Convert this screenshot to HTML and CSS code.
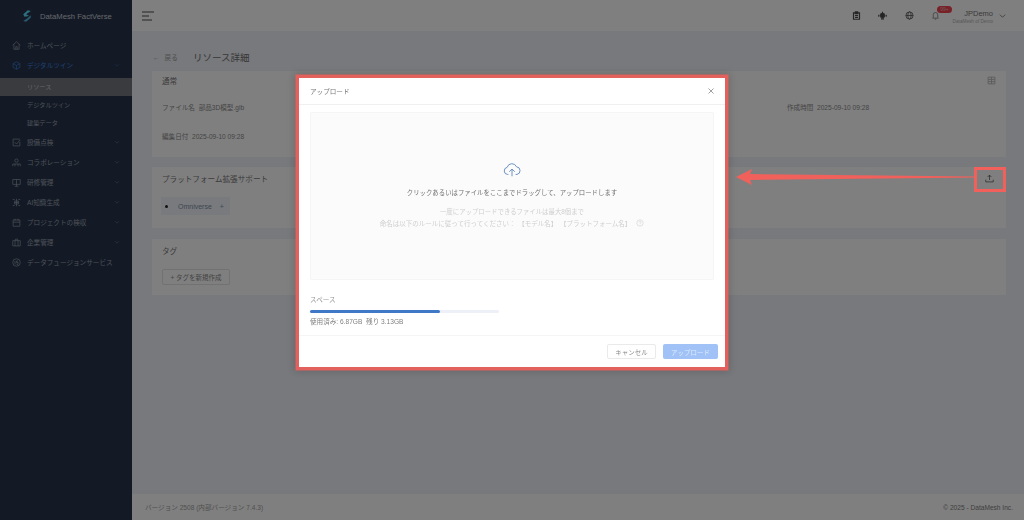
FILE: index.html
```html
<!DOCTYPE html>
<html lang="ja">
<head>
  <meta charset="UTF-8" />
  <meta name="viewport" content="width=device-width, initial-scale=1.0"/>
  <title>リソース詳細</title>
  <link rel="stylesheet" href="styles.css">
</head>
<body>
  <div class="app">
    <aside class="sidebar">
      <div class="brand">
        <svg class="brand-logo" viewBox="0 0 12 14"><path d="M7 0 L10.5 1 L5 5 L8.5 7 L3 8 L1.5 5 Z" fill="#5adfff"/><path d="M10.5 6 L10.5 9 L5 14 L1.5 13 L7 9.5 Z" fill="#4fb4e0"/></svg>
        <span>DataMesh FactVerse</span>
      </div>
      <nav class="menu">
        <div class="menu-item">
          <svg class="menu-icon" viewBox="0 0 12 12"><path d="M1 5.5 L6 1 L11 5.5 M2.5 4.5 V11 H9.5 V4.5 M5 11 V7.5 H7 V11"/></svg>
          <span>ホームページ</span>
        </div>
        <div class="menu-item is-active">
          <svg class="menu-icon" viewBox="0 0 12 12"><path d="M6 1 L10.5 3.5 V8.5 L6 11 L1.5 8.5 V3.5 Z M1.5 3.5 L6 6 L10.5 3.5 M6 6 V11"/></svg>
          <span>デジタルツイン</span>
          <svg class="menu-caret" viewBox="0 0 8 8"><path d="M1.5 3 L4 5.5 L6.5 3"/></svg>
        </div>
        <div class="submenu">
          <div class="menu-sub is-current">リソース</div>
          <div class="menu-sub">デジタルツイン</div>
          <div class="menu-sub">建築データ</div>
        </div>
        <div class="menu-item">
          <svg class="menu-icon" viewBox="0 0 12 12"><path d="M10.5 5 V10.5 H1.5 V1.5 H10.5 M3.5 5.5 L6 8 L11 2.5"/></svg>
          <span>設備点検</span>
          <svg class="menu-caret" viewBox="0 0 8 8"><path d="M1.5 3 L4 5.5 L6.5 3"/></svg>
        </div>
        <div class="menu-item">
          <svg class="menu-icon" viewBox="0 0 12 12"><circle cx="6" cy="3.5" r="2.2"/><path d="M1 11 V8 H11 V11 M4 8 V11 M8 8 V11"/></svg>
          <span>コラボレーション</span>
          <svg class="menu-caret" viewBox="0 0 8 8"><path d="M1.5 3 L4 5.5 L6.5 3"/></svg>
        </div>
        <div class="menu-item">
          <svg class="menu-icon" viewBox="0 0 12 12"><path d="M1 2 H11 V8.5 H1 Z M6 2 V11 M3.5 11 H8.5"/></svg>
          <span>研修管理</span>
          <svg class="menu-caret" viewBox="0 0 8 8"><path d="M1.5 3 L4 5.5 L6.5 3"/></svg>
        </div>
        <div class="menu-item">
          <svg class="menu-icon" viewBox="0 0 12 12"><path d="M1 2 L3.5 2 M8.5 2 L11 2 M1 10 L3.5 10 M8.5 10 L11 10 M6 1 V11 M3 6 H9 M3.5 4 H8.5 V8 H3.5 Z"/></svg>
          <span>AI知識生成</span>
          <svg class="menu-caret" viewBox="0 0 8 8"><path d="M1.5 3 L4 5.5 L6.5 3"/></svg>
        </div>
        <div class="menu-item">
          <svg class="menu-icon" viewBox="0 0 12 12"><path d="M1.5 2.5 H10.5 V11 H1.5 Z M1.5 5.5 H10.5 M4 1 V3.5 M8 1 V3.5"/></svg>
          <span>プロジェクトの検収</span>
          <svg class="menu-caret" viewBox="0 0 8 8"><path d="M1.5 3 L4 5.5 L6.5 3"/></svg>
        </div>
        <div class="menu-item">
          <svg class="menu-icon" viewBox="0 0 12 12"><path d="M1 3.5 H11 V10.5 H1 Z M4.5 3.5 V1.5 H7.5 V3.5 M4 3.5 V10.5 M8 3.5 V10.5"/></svg>
          <span>企業管理</span>
          <svg class="menu-caret" viewBox="0 0 8 8"><path d="M1.5 3 L4 5.5 L6.5 3"/></svg>
        </div>
        <div class="menu-item">
          <svg class="menu-icon" viewBox="0 0 12 12"><circle cx="6" cy="6" r="5"/><path d="M4 4 V8.5 M6 4 H8 M6 4 V6 H8 V8.5 H6"/></svg>
          <span>データフュージョンサービス</span>
        </div>
      </nav>
    </aside>

    <div class="main">
      <header class="topbar">
        <svg class="hamburger" viewBox="0 0 12 10"><path d="M0 1 H12 M0 5 H7 M0 9 H10"/></svg>
        <div class="topbar-right">
          <svg class="top-icon" viewBox="0 0 12 12"><path d="M2 2.5 H10 V11 H2 Z M4.5 1 H7.5 V3.5 H4.5 Z M4 6 H8 M4 8.5 H8" stroke-width="1.6"/></svg>
          <svg class="top-icon" viewBox="0 0 12 12"><circle cx="6" cy="6" r="3.2" fill="currentColor"/><path d="M6 1 V3 M1 5 V7.5 M11 5 V7.5 M4 10.5 H8" stroke-width="1.4"/></svg>
          <svg class="top-icon" viewBox="0 0 12 12"><circle cx="6" cy="6" r="4.8"/><ellipse cx="6" cy="6" rx="2.2" ry="4.8"/><path d="M1.2 6 H10.8"/></svg>
          <span class="bell">
            <svg class="bell-icon" viewBox="0 0 12 12"><path d="M3 8.5 V5 A3 3 0 0 1 9 5 V8.5 L10 9.5 H2 Z M5 11 H7"/></svg>
            <b class="badge">99+</b>
          </span>
          <div class="user">
            <div class="user-name">JPDemo</div>
            <div class="user-org">DataMesh of Demo</div>
          </div>
          <svg class="user-caret" viewBox="0 0 8 8"><path d="M1 3 L4 6 L7 3"/></svg>
        </div>
      </header>

      <main class="content">
        <div class="crumb">
          <span class="back"><span class="back-arrow">←</span>戻る</span>
          <h1>リソース詳細</h1>
        </div>

        <section class="card card-general">
          <div class="card-head">
            <h2>通常</h2>
            <svg class="head-icon" viewBox="0 0 12 12"><path d="M1.5 1.5 H10.5 V10.5 H1.5 Z M1.5 4.5 H10.5 M1.5 7.5 H10.5 M6 1.5 V10.5" stroke-width="1.3"/></svg>
          </div>
          <div class="info-grid">
            <div>ファイル名&nbsp; 部品3D模型.glb</div>
            <div>作成時間&nbsp; 2025-09-10 09:28</div>
            <div>編集日付&nbsp; 2025-09-10 09:28</div>
          </div>
        </section>

        <section class="card card-platform">
          <div class="card-row">
            <h2>プラットフォーム拡張サポート</h2>
            <svg class="upload-icon" viewBox="0 0 12 12"><path d="M6 8 V1.5 M3.5 4 L6 1.5 L8.5 4 M1 7.5 V10.5 H11 V7.5"/></svg>
          </div>
          <div class="chip"><i class="chip-dot"></i>Omniverse<span class="chip-plus">+</span></div>
        </section>

        <section class="card card-tags">
          <h2>タグ</h2>
          <button class="btn-tag">+ タグを新規作成</button>
        </section>
      </main>

      <footer class="footer">
        <span>バージョン 2508 (内部バージョン 7.4.3)</span>
        <span class="copyright">© 2025 - DataMesh Inc.</span>
      </footer>
    </div>
  </div>

  <div class="overlay">
    <div class="modal">
      <div class="modal-head">
        <span>アップロード</span>
        <svg class="modal-close" viewBox="0 0 8 8"><path d="M1.5 1.5 L6.5 6.5 M6.5 1.5 L1.5 6.5"/></svg>
      </div>
      <div class="modal-body">
        <div class="dropzone">
          <svg class="cloud" viewBox="0 0 20 16"><path d="M6 13.5 H5 A4 4 0 0 1 4.6 5.6 A5.5 5.5 0 0 1 15 5 A4.3 4.3 0 0 1 15.5 13.5 H14 M10 15.5 V7.5 M7 10.5 L10 7.5 L13 10.5"/></svg>
          <p class="drop-title">クリックあるいはファイルをここまでドラッグして、アップロードします</p>
          <p class="drop-hint">一度にアップロードできるファイルは最大8個まで</p>
          <p class="drop-hint hint-rule">命名は以下のルールに従って行ってください： 【モデル名】 【プラットフォーム名】
            <svg class="help" viewBox="0 0 10 10"><circle cx="5" cy="5" r="4"/><path d="M3.8 4 A1.2 1.2 0 1 1 5 5.3 V6 M5 7 V7.6"/></svg>
          </p>
        </div>
        <div class="space-label">スペース</div>
        <div class="progress"><div class="progress-fill" style="width: 68.7%"></div></div>
        <div class="space-text">使用済み: 6.87GB&nbsp; 残り 3.13GB</div>
      </div>
      <div class="modal-foot">
        <button class="btn btn-cancel">キャンセル</button>
        <button class="btn btn-upload">アップロード</button>
      </div>
    </div>
  </div>

  <!-- annotation drawn on top of the screenshot -->
  <div class="mark-box"></div>
  <svg class="mark-arrow" viewBox="0 0 240 16"><path d="M0 8 L16 0 L14 5 L240 7.6 V8.4 L14 11 L16 16 Z"/></svg>
</body>
</html>
```

FILE: styles.css
```css
:root {
  --sidebar: #28344a;
  --page: #eef2f8;
  --primary: #3a80e0;
  --text: #8a8a8a;
  --mark: #f2605b;
}

* {
  box-sizing: border-box;
}

html, body {
  height: 100%;
}

body {
  margin: 0;
  font-family: "Liberation Sans", "Noto Sans CJK JP", sans-serif;
  font-size: 6.6px;
  color: var(--text);
  overflow: hidden;
}

svg {
  fill: none;
  stroke: currentColor;
  stroke-width: 1;
}

.app {
  display: flex;
  height: 520px;
}

/* sidebar */
.sidebar {
  width: 132px;
  flex: none;
  background: var(--sidebar);
  color: #9aa2b0;
}

.brand {
  display: flex;
  align-items: center;
  gap: 8px;
  height: 35px;
  padding: 0 0 3px 22px;
  font-size: 7.7px;
  color: #c8ced8;
}

.brand-logo {
  width: 10px;
  height: 12px;
  stroke: none;
}

.menu-item, .menu-sub {
  display: flex;
  align-items: center;
  white-space: nowrap;
}

.menu-item {
  height: 20px;
  padding: 0 12px;
  gap: 6px;
}

.menu-item.is-active {
  color: var(--primary);
}

.menu-icon {
  width: 9px;
  height: 9px;
  flex: none;
  stroke-width: .9;
}

.menu-caret {
  width: 6px;
  height: 6px;
  margin-left: auto;
  opacity: .5;
}

.submenu {
  padding-top: 3px;
}

.menu-sub {
  height: 18px;
  padding: 0 0 2px 27px;
  font-size: 6.2px;
}

.menu-sub.is-current {
  background: #74767e;
  color: #c8cad0;
}

/* main column */
.main {
  flex: 1;
  min-width: 0;
  display: flex;
  flex-direction: column;
  background: var(--page);
}

.topbar {
  height: 31px;
  flex: none;
  display: flex;
  align-items: center;
  justify-content: space-between;
  background: #fff;
  padding: 0 18px 0 10px;
}

.hamburger {
  width: 12px;
  height: 10px;
  stroke-width: 1.1;
  color: #4a4a4a;
}

.topbar-right {
  display: flex;
  align-items: center;
  color: #4a4a4a;
}

.top-icon {
  width: 9px;
  height: 9px;
  margin-right: 17.3px;
  display: block;
}

.bell {
  position: relative;
  margin-right: 12px;
}

.bell-icon {
  display: block;
  width: 9px;
  height: 9px;
  color: #777;
}

.badge {
  position: absolute;
  left: 6px;
  top: -5px;
  width: 15px;
  height: 7px;
  line-height: 7px;
  border-radius: 4px;
  background: #f0434f;
  color: #e8b0b4;
  font-size: 5px;
  font-weight: normal;
  text-align: center;
}

.user {
  width: 41px;
  padding-top: 2px;
  text-align: right;
}

.user-name {
  font-size: 7.5px;
  line-height: 9px;
  color: #777;
}

.user-org {
  font-size: 4.7px;
  line-height: 7px;
  color: #b0b0b0;
  white-space: nowrap;
}

.user-caret {
  width: 7px;
  height: 7px;
  margin-left: 6px;
  color: #777;
}

/* content */
.content {
  flex: 1;
  padding: 0 18px 0 20px;
}

.crumb {
  display: flex;
  align-items: center;
  height: 40px;
  padding-top: 12px;
}

.back {
  width: 41px;
  color: #a0a0a0;
  padding-left: 1px;
}

.back-arrow {
  margin-right: 5px;
}

h1 {
  margin: 0;
  font-size: 9.5px;
  font-weight: normal;
  color: #6e6e6e;
}

h2 {
  margin: 0;
  font-size: 7.6px;
  font-weight: normal;
  color: #777;
}

.card {
  background: #fff;
}

.card-general {
  height: 86px;
}

.card-head {
  display: flex;
  align-items: center;
  justify-content: space-between;
  height: 18px;
  padding: 0 10px;
}

.head-icon {
  width: 9px;
  height: 9px;
  color: #bbb;
}

.info-grid {
  display: grid;
  grid-template-columns: 625px 1fr;
  row-gap: 20px;
  padding: 14px 10px 0;
  line-height: 9px;
}

.card-platform {
  height: 61px;
  margin-top: 10px;
  padding: 0 9px;
}

.card-row {
  display: flex;
  align-items: center;
  justify-content: space-between;
  height: 23px;
  padding: 0 3px 0 1px;
}

.upload-icon {
  width: 9px;
  height: 9px;
  color: #555;
}

.chip {
  display: inline-flex;
  align-items: center;
  height: 18px;
  margin-top: 7px;
  padding: 0 6px 0 4px;
  background: #f1f5fa;
  color: #7d8fa8;
  font-size: 7px;
}

.chip-dot {
  width: 3px;
  height: 3px;
  border-radius: 50%;
  background: #222;
  margin-right: 10px;
}

.chip-plus {
  margin-left: 8px;
}

.card-tags {
  height: 56px;
  margin-top: 11px;
  padding: 6px 10px;
}

.btn-tag {
  display: block;
  width: 68px;
  height: 16px;
  margin-top: 13px;
  padding: 0;
  background: #fff;
  border: 1px solid #e4e4e4;
  border-radius: 2px;
  font: inherit;
  font-size: 6.5px;
  color: #888;
}

.footer {
  height: 26px;
  flex: none;
  display: flex;
  align-items: center;
  justify-content: space-between;
  padding: 0 11px 0 13px;
  background: #fff;
  color: #a0a0a0;
}

.copyright {
  color: #808080;
}

/* dialog */
.overlay {
  position: fixed;
  inset: 0;
  display: flex;
  justify-content: center;
  align-items: flex-start;
  padding-top: 78px;
  background: rgba(0, 0, 0, .5);
}

.modal {
  width: 426px;
  height: 289px;
  display: flex;
  flex-direction: column;
  background: #fff;
  box-shadow: 0 0 0 3.5px #e2615c, 0 0 8px 5px rgba(0, 0, 0, .15);
}

.modal-head {
  display: flex;
  align-items: center;
  justify-content: space-between;
  height: 27px;
  flex: none;
  padding: 0 10px 0 11px;
  border-bottom: 1px solid #f0f0f0;
  color: #777;
}

.modal-close {
  width: 8px;
  height: 8px;
  color: #888;
  stroke-width: .8;
}

.modal-body {
  flex: 1;
  padding: 7px 11px 0;
}

.dropzone {
  height: 168px;
  background: #fbfbfb;
  border: 1px solid #f5f5f5;
  border-radius: 2px;
  text-align: center;
  padding-top: 49px;
}

.cloud {
  display: block;
  width: 18px;
  height: 15px;
  margin: 0 auto;
  color: #5f86ba;
}

.dropzone p {
  margin: 0;
  font-size: 6.4px;
}

.drop-title {
  padding-top: 11px;
  line-height: 10px;
  color: #707070;
}

.drop-hint {
  line-height: 11.5px;
  color: #cfcfcf;
}

.dropzone .hint-rule {
  font-size: 6.5px;
  word-spacing: 1px;
}

.drop-title + .drop-hint {
  margin-top: 8px;
}

.help {
  width: 8px;
  height: 8px;
  margin-left: 2px;
  vertical-align: -1.5px;
  stroke-width: .7;
}

.space-label {
  margin-top: 15px;
  line-height: 10px;
  color: #999;
}

.progress {
  width: 189px;
  height: 3px;
  margin-top: 5px;
  border-radius: 2px;
  background: #eef0f7;
}

.progress-fill {
  height: 100%;
  border-radius: 2px;
  background: #4078c8;
}

.space-text {
  margin-top: 4px;
  line-height: 10px;
  color: #808080;
}

.modal-foot {
  height: 32px;
  flex: none;
  display: flex;
  justify-content: flex-end;
  align-items: center;
  gap: 7px;
  padding-right: 7px;
  border-top: 1px solid #f5f5f5;
}

.btn {
  height: 15px;
  padding: 0;
  border-radius: 2px;
  font: inherit;
  font-size: 6.5px;
}

.btn-cancel {
  width: 49px;
  background: #fff;
  border: 1px solid #eaeaea;
  color: #888;
}

.btn-upload {
  width: 55px;
  background: #a0c2f6;
  border: 0;
  color: #dde9fc;
}

/* annotation */
.mark-box {
  position: fixed;
  left: 974px;
  top: 167px;
  width: 32px;
  height: 25px;
  border: 3px solid var(--mark);
}

.mark-arrow {
  position: fixed;
  left: 736px;
  top: 169px;
  width: 240px;
  height: 16px;
  fill: var(--mark);
  stroke: none;
}
```
